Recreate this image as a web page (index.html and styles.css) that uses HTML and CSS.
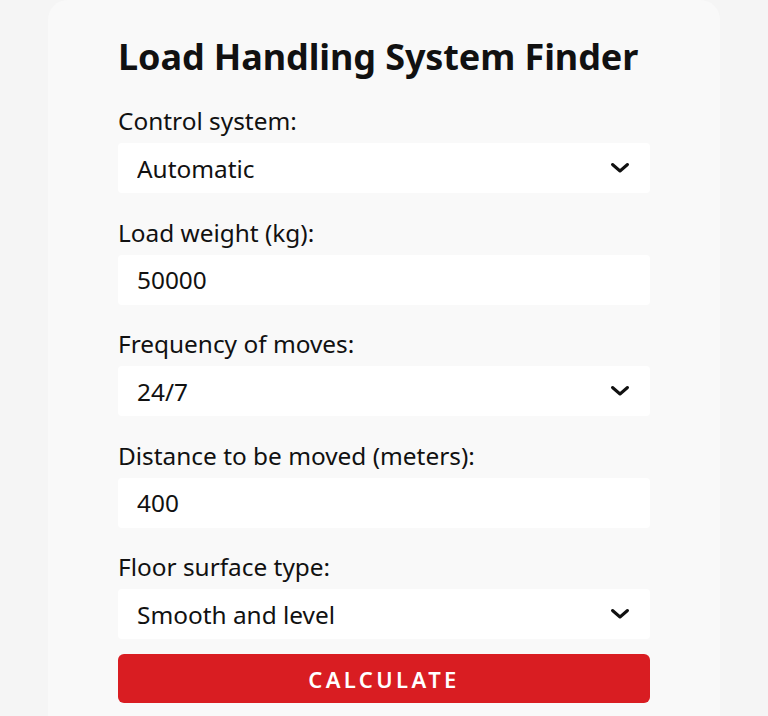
FILE: index.html
```html
<!DOCTYPE html>
<html lang="en">
<head>
<meta charset="utf-8">
<title>Load Handling System Finder</title>
<link rel="stylesheet" href="styles.css">
</head>
<body>
<main class="card">
  <h1 class="title">Load Handling System Finder</h1>
  <form class="form">
    <div class="field">
      <label class="label" for="control">Control system:</label>
      <div class="select-wrap">
        <select id="control" class="control select"><option>Automatic</option><option>Manual</option></select>
        <svg class="chevron" width="20" height="12" viewBox="0 0 20 12"><path d="M2.5 2.5 L10 9 L17.5 2.5" fill="none" stroke="#111" stroke-width="3" stroke-linecap="round" stroke-linejoin="round"/></svg>
      </div>
    </div>
    <div class="field">
      <label class="label" for="weight">Load weight (kg):</label>
      <input id="weight" class="control" type="text" value="50000">
    </div>
    <div class="field">
      <label class="label" for="freq">Frequency of moves:</label>
      <div class="select-wrap">
        <select id="freq" class="control select"><option>24/7</option></select>
        <svg class="chevron" width="20" height="12" viewBox="0 0 20 12"><path d="M2.5 2.5 L10 9 L17.5 2.5" fill="none" stroke="#111" stroke-width="3" stroke-linecap="round" stroke-linejoin="round"/></svg>
      </div>
    </div>
    <div class="field">
      <label class="label" for="dist">Distance to be moved (meters):</label>
      <input id="dist" class="control" type="text" value="400">
    </div>
    <div class="field last">
      <label class="label" for="floor">Floor surface type:</label>
      <div class="select-wrap">
        <select id="floor" class="control select"><option>Smooth and level</option></select>
        <svg class="chevron" width="20" height="12" viewBox="0 0 20 12"><path d="M2.5 2.5 L10 9 L17.5 2.5" fill="none" stroke="#111" stroke-width="3" stroke-linecap="round" stroke-linejoin="round"/></svg>
      </div>
    </div>
    <button type="button" class="btn">CALCULATE</button>
  </form>
</main>
</body>
</html>
```

FILE: styles.css
```css
* { box-sizing: border-box; }
html, body { margin: 0; padding: 0; }
body {
  background: #f5f5f5;
  font-family: "Noto Sans", "Open Sans", "DejaVu Sans", sans-serif;
  color: #111;
  height: 716px;
  overflow: hidden;
}
.card {
  width: 672px;
  margin: 0 auto;
  background: #f9f9f9;
  border-radius: 20px 20px 0 0;
  padding: 35px 70px 40px;
  min-height: 716px;
}
.title {
  margin: 0 0 26px;
  font-size: 36px;
  line-height: 44px;
  font-weight: 700;
  letter-spacing: -0.1px;
}
.form { display: flex; flex-direction: column; }
.field { display: flex; flex-direction: column; margin-bottom: 23.5px; }
.field.last { margin-bottom: 15px; }
.label {
  font-size: 24.4px;
  line-height: 32px;
  margin-bottom: 6px;
}
.select-wrap { position: relative; }
.control {
  display: block;
  width: 100%;
  height: 50px;
  border: none;
  border-radius: 4px;
  background: #fff;
  padding: 0 19px;
  font-family: inherit;
  font-size: 24.4px;
  color: #111;
  outline: none;
  -webkit-appearance: none;
  appearance: none;
}
.chevron {
  position: absolute;
  right: 20px;
  top: 19px;
  pointer-events: none;
}
.btn {
  height: 49px;
  width: 100%;
  border: none;
  border-radius: 6px;
  background: #d91d22;
  color: #fff;
  font-family: inherit;
  font-size: 22px;
  font-weight: 600;
  letter-spacing: 3.4px;
  cursor: pointer;
}
```
